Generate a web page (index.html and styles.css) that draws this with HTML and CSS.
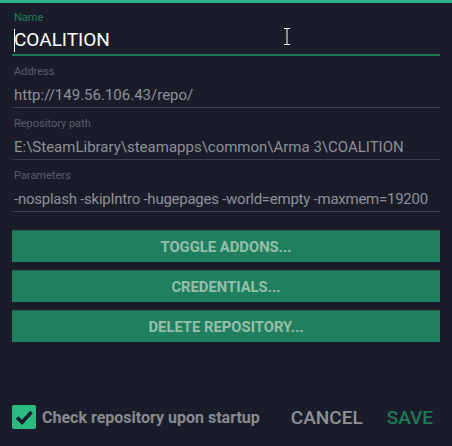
FILE: index.html
```html
<!DOCTYPE html>
<html>
<head>
<meta charset="utf-8">
<link rel="stylesheet" href="styles.css">
</head>
<body>
<div class="dialog">
  <div class="topbar"></div>
  <div class="content">
    <div class="field field-active">
      <div class="label">Name</div>
      <div class="value value-main"><span class="caret"></span>COALITION</div>
    </div>
    <div class="field">
      <div class="label">Address</div>
      <div class="value">http://149.56.106.43/repo/</div>
    </div>
    <div class="field">
      <div class="label">Repository path</div>
      <div class="value">E:\SteamLibrary\steamapps\common\Arma 3\COALITION</div>
    </div>
    <div class="field">
      <div class="label">Parameters</div>
      <div class="value value-tight">-nosplash -skipIntro -hugepages -world=empty -maxmem=19200</div>
    </div>
    <div class="buttons">
      <div class="btn">TOGGLE ADDONS...</div>
      <div class="btn">CREDENTIALS...</div>
      <div class="btn">DELETE REPOSITORY...</div>
    </div>
    <div class="footer">
      <div class="check">
        <svg class="checkbox" width="24" height="24" viewBox="0 0 24 24">
          <rect x="0" y="0" width="24" height="24" rx="2" fill="#2bbb85"/>
          <polyline points="5,12.5 10,17.5 19.5,7" fill="none" stroke="#1a1d29" stroke-width="3.6"/>
        </svg>
        <span class="check-label">Check repository upon startup</span>
      </div>
      <div class="actions">
        <span class="action cancel">CANCEL</span>
        <span class="action save">SAVE</span>
      </div>
    </div>
  </div>
  <svg class="ibeam" width="8" height="17" viewBox="0 0 8 17">
    <path d="M1 0.5H7M4 0.5V16.5M1 16.5H7" stroke="#ffffff" stroke-width="1" fill="none"/>
  </svg>
</div>
</body>
</html>
```

FILE: styles.css
```css
html, body {
  margin: 0;
  padding: 0;
  background: #1a1d29;
}
body {
  width: 452px;
  height: 446px;
  overflow: hidden;
  font-family: Roboto, "Liberation Sans", sans-serif;
}
.dialog {
  position: relative;
  width: 452px;
  height: 446px;
  display: flex;
  flex-direction: column;
}
.topbar {
  height: 3px;
  background: #2bb584;
}
.content {
  flex: 1;
  display: flex;
  flex-direction: column;
  padding: 0 12px 17px 12px;
}
.field {
  border-bottom: 1px solid #3b3e4a;
  padding-top: 9px;
}
.field-active {
  border-bottom: 2px solid #1f7a5a;
  padding-top: 8px;
}
.label {
  height: 14px;
  line-height: 14px;
  font-size: 11px;
  color: #5a5e6c;
  padding-left: 2px;
}
.field-active .label {
  color: #237d5b;
}
.value {
  height: 28px;
  line-height: 33px;
  font-size: 15px;
  color: #8d9099;
  padding-left: 2px;
  white-space: nowrap;
}
.value-tight {
  letter-spacing: -0.25px;
}
.value-main {
  height: 29px;
  line-height: 30px;
  font-size: 19px;
  color: #ffffff;
  position: relative;
}
.caret {
  position: absolute;
  left: 2px;
  top: 4px;
  width: 1px;
  height: 23px;
  background: #ffffff;
}
.buttons {
  margin-top: 18px;
  display: flex;
  flex-direction: column;
  gap: 8px;
}
.btn {
  height: 32px;
  line-height: 32px;
  background: #207f5f;
  border-top: 1px solid #24604e;
  box-sizing: border-box;
  text-align: center;
  font-size: 14.8px;
  font-weight: 700;
  color: #95bfab;
}
.footer {
  margin-top: auto;
  height: 24px;
  display: flex;
  align-items: center;
  justify-content: space-between;
}
.check {
  display: flex;
  align-items: center;
  gap: 6px;
}
.checkbox {
  display: block;
}
.check-label {
  font-size: 16px;
  font-weight: 700;
  color: #888a90;
}
.actions {
  display: flex;
  align-items: center;
  gap: 24px;
  padding-right: 7px;
}
.action {
  font-size: 19px;
  font-weight: 500;
}
.cancel {
  color: #8e9098;
}
.save {
  color: #1f7757;
}
.ibeam {
  position: absolute;
  left: 283px;
  top: 28px;
}
```
